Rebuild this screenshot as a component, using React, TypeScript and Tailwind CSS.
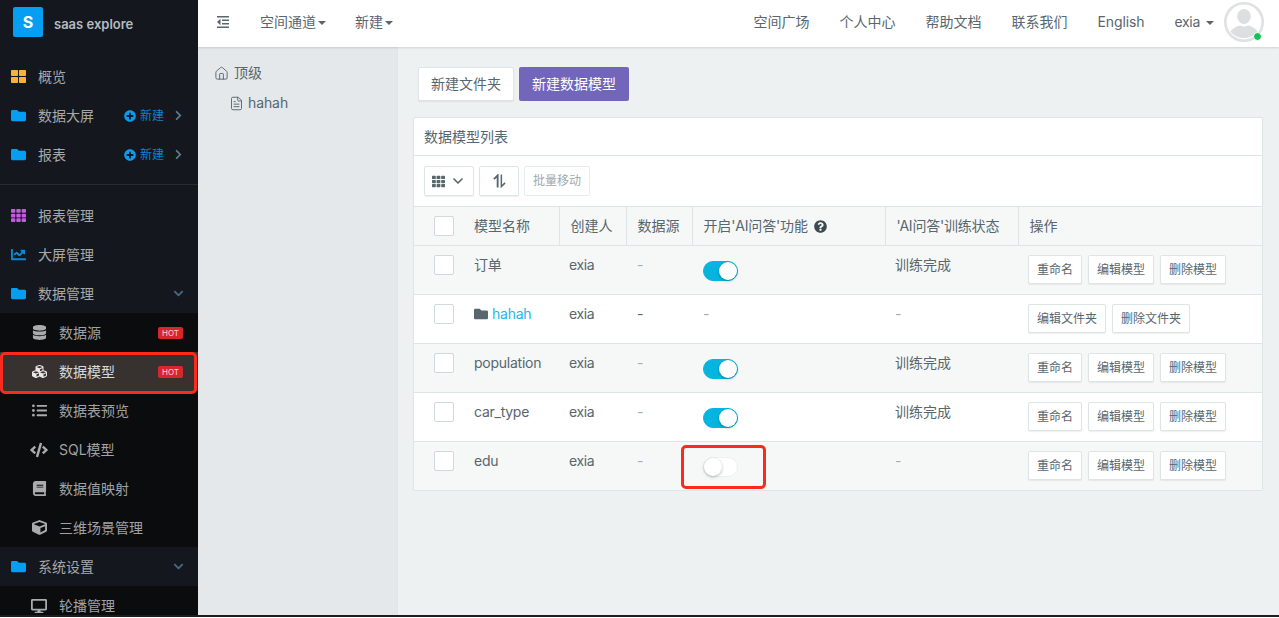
import { ReactNode } from 'react';
import {
  FaFolder,
  FaThLarge,
  FaTh,
  FaChartLine,
  FaDatabase,
  FaCubes,
  FaListUl,
  FaCode,
  FaBook,
  FaCube,
  FaDesktop,
  FaPlusCircle,
  FaChevronRight,
  FaChevronDown,
  FaQuestionCircle,
} from 'react-icons/fa';
import { Home, FileText, ChevronDown } from 'lucide-react';

const fontStack = "font-['Inter','Noto_Sans_CJK_SC',sans-serif]";

function NewTag() {
  return (
    <span className="flex items-center gap-[4px] text-xs text-[#0b84c9]">
      <FaPlusCircle className="text-[12px] text-[#0c9cee]" />
      新建
    </span>
  );
}

function NavRow({ icon, label, right, className = '' }: { icon: ReactNode; label: string; right?: ReactNode; className?: string }) {
  return (
    <div className={`flex h-[39px] shrink-0 items-center pl-[11px] pr-[14px] ${className}`}>
      <span className="flex w-[27px] shrink-0 items-center">{icon}</span>
      <span className="flex-1 text-sm text-[#a6a8aa]">{label}</span>
      {right}
    </div>
  );
}

function SubRow({ icon, label, hot, active }: { icon: ReactNode; label: string; hot?: boolean; active?: boolean }) {
  return (
    <div className={`flex h-[39px] shrink-0 items-center pl-[30px] pr-[15px] ${active ? 'bg-[#373230]' : ''}`}>
      <span className={`mr-[11px] flex w-[18px] shrink-0 items-center justify-center text-[15px] ${active ? 'text-[#e8e8e8]' : 'text-[#a9abad]'}`}>{icon}</span>
      <span className={`flex-1 text-sm ${active ? 'text-[#d8d8d8]' : 'text-[#a0a2a4]'}`}>{label}</span>
      {hot && <span className="rounded-[2px] bg-[#d9262e] px-[4px] text-[8px] leading-[12px] text-[#f5d5d5]">HOT</span>}
    </div>
  );
}

function Sidebar() {
  const chevronRight = <FaChevronRight className="text-[11px] text-[#5b7c92]" />;
  const chevronDown = <FaChevronDown className="text-[11px] text-[#456a80]" />;
  return (
    <aside className="flex h-full w-[198px] shrink-0 flex-col overflow-hidden bg-[#14171d]">
      <div className="flex h-[57px] shrink-0 items-start pl-[13px] pt-[7px]">
        <div className="flex h-[30px] w-[30px] items-center justify-center rounded-[2px] bg-[#069ef2] text-base font-bold text-white">S</div>
        <span className="ml-[11px] mt-[8px] text-[13px] font-semibold leading-[18px] text-[#b4bbc1]">saas explore</span>
      </div>
      <NavRow icon={<FaThLarge className="text-[15px] text-[#fdb133]" />} label="概览" />
      <NavRow icon={<FaFolder className="text-[15px] text-[#069ef2]" />} label="数据大屏" right={<span className="flex items-center gap-[9px]"><NewTag />{chevronRight}</span>} />
      <NavRow icon={<FaFolder className="text-[15px] text-[#069ef2]" />} label="报表" right={<span className="flex items-center gap-[9px]"><NewTag />{chevronRight}</span>} />
      <div className="mb-[11px] mt-[10px] h-[1px] shrink-0 border-t border-[#2b2c2e]" />
      <NavRow icon={<FaTh className="text-[15px] text-[#c45ae0]" />} label="报表管理" />
      <NavRow icon={<FaChartLine className="text-[15px] text-[#0a8ad6]" />} label="大屏管理" />
      <NavRow icon={<FaFolder className="text-[15px] text-[#069ef2]" />} label="数据管理" right={chevronDown} />
      <div className="flex shrink-0 flex-col bg-[#0b0c0e]">
        <SubRow icon={<FaDatabase />} label="数据源" hot />
        <SubRow icon={<FaCubes />} label="数据模型" hot active />
        <SubRow icon={<FaListUl />} label="数据表预览" />
        <SubRow icon={<FaCode className="text-[18px]" />} label="SQL模型" />
        <SubRow icon={<FaBook />} label="数据值映射" />
        <SubRow icon={<FaCube />} label="三维场景管理" />
      </div>
      <NavRow icon={<FaFolder className="text-[15px] text-[#069ef2]" />} label="系统设置" right={chevronDown} />
      <div className="flex shrink-0 flex-col bg-[#0b0c0e]">
        <SubRow icon={<FaDesktop className="text-[16px]" />} label="轮播管理" />
      </div>
    </aside>
  );
}

function Caret() {
  return <span className="ml-[2px] inline-block border-x-[4px] border-t-[4px] border-x-transparent border-t-[#58666e] align-middle" />;
}

function Topbar() {
  return (
    <header className="relative z-10 flex h-[47px] shrink-0 items-center bg-white pb-[4px] pl-[19px] pr-[15px] text-sm text-[#58666e] shadow-[0_1px_2px_rgba(0,0,0,0.12)]">
      <svg viewBox="0 0 12 12" className="h-[12px] w-[12px]" fill="#58666e">
        <rect x="0" y="0" width="12" height="1.5" />
        <rect x="5" y="3.5" width="7" height="1.5" />
        <rect x="5" y="7" width="7" height="1.5" />
        <rect x="0" y="10.5" width="12" height="1.5" />
        <path d="M3.5 2.8v6.4L0 6z" />
      </svg>
      <span className="ml-[31px]">空间通道<Caret /></span>
      <span className="ml-[29px]">新建<Caret /></span>
      <div className="ml-auto flex items-center">
        <span>空间广场</span>
        <span className="ml-[30px]">个人中心</span>
        <span className="ml-[30px]">帮助文档</span>
        <span className="ml-[30px]">联系我们</span>
        <span className="ml-[30px] tracking-[-0.1px]">English</span>
        <span className="ml-[30px] tracking-[-0.3px]">exia<span className="ml-[6px] inline-block border-x-[4px] border-t-[4px] border-x-transparent border-t-[#58666e] align-middle" /></span>
        <span className="relative ml-[10px] block h-[40px] w-[40px]">
          <svg viewBox="0 0 40 40" className="h-[40px] w-[40px]">
            <circle cx="20" cy="20" r="18.7" fill="#fff" stroke="#dfe1e2" strokeWidth="2.6" />
            <ellipse cx="20" cy="14.5" rx="6.8" ry="7.6" fill="#dcdee0" />
            <path d="M6.5 29.5c2-3.5 6.5-5.5 9.5-6 2.5 1.5 5.5 1.5 8 0 3 .5 7.500 2.500 9.500 6-3 4-8 6.500-13.500 6.500s-10.500-2.500-13.500-6.500z" fill="#dcdee0" />
          </svg>
          <span className="absolute bottom-[1px] right-[2px] h-[9px] w-[9px] rounded-full border border-white bg-[#14c25a]" />
        </span>
      </div>
    </header>
  );
}

function Tree() {
  return (
    <div className="w-[200px] shrink-0 border-r border-[#e0e5e8] bg-[#e4e8eb] pl-[16px] pt-[16px] text-sm text-[#58666e]">
      <div className="flex h-[20px] items-center">
        <Home size={15} strokeWidth={1.5} />
        <span className="ml-[5px]">顶级</span>
      </div>
      <div className="ml-[15px] mt-[10px] flex h-[20px] items-center">
        <FileText size={15} strokeWidth={1.5} />
        <span className="ml-[4px] tracking-[-0.1px]">hahah</span>
      </div>
    </div>
  );
}

function Toggle({ on }: { on: boolean }) {
  return (
    <span className={`flex h-[20px] w-[35px] rounded-full border ${on ? 'justify-end border-[#05b5e0] bg-[#05b5e0]' : 'justify-start border-[#eef0f1] bg-white'}`}>
      <span className="h-[18px] w-[18px] rounded-full bg-white shadow-[0_1px_3px_rgba(0,0,0,0.3)]" />
    </span>
  );
}

function Check() {
  return <span className="block h-[20px] w-[20px] rounded-[2px] border border-[#cfdadd] bg-white" />;
}

function RowBtn({ children }: { children: ReactNode }) {
  return (
    <span className="flex h-[29px] items-center rounded-[2px] border border-[#dee5e7] bg-white px-[8px] text-xs text-[#58666e] shadow-[0_1px_1px_rgba(90,90,90,0.1)]">
      {children}
    </span>
  );
}

interface ModelRow {
  name: string;
  folder?: boolean;
  ai: boolean | null;
  status: string;
}

const rows: ModelRow[] = [
  { name: '订单', ai: true, status: '训练完成' },
  { name: 'hahah', folder: true, ai: null, status: '-' },
  { name: 'population', ai: true, status: '训练完成' },
  { name: 'car_type', ai: true, status: '训练完成' },
  { name: 'edu', ai: false, status: '-' },
];

function ModelTable() {
  const th = 'h-[39px] border-l border-[#dee5e7] px-[11px] text-left align-middle font-normal first:border-l-0';
  return (
    <table className="w-full table-fixed border-collapse text-sm text-[#58666e]">
      <colgroup>
        <col className="w-[145px]" />
        <col className="w-[67px]" />
        <col className="w-[66px]" />
        <col className="w-[193px]" />
        <col className="w-[133px]" />
        <col />
      </colgroup>
      <thead>
        <tr className="border-y border-[#dee5e7] bg-[#f6f8f8]">
          <th className={th}>
            <span className="flex items-center">
              <span className="ml-[9px] mr-[20px]"><Check /></span>模型名称
            </span>
          </th>
          <th className={th}>创建人</th>
          <th className={th}>数据源</th>
          <th className={th}>
            <span className="flex items-center tracking-[-0.15px]">开启'AI问答'功能<FaQuestionCircle className="ml-[6px] text-[13px] text-[#3d4a50]" /></span>
          </th>
          <th className={`${th} tracking-[-0.2px]`}>'AI问答'训练状态</th>
          <th className={th}>操作</th>
        </tr>
      </thead>
      <tbody>
        {rows.map((row, i) => (
          <tr key={row.name} className={`h-[49px] border-b border-[#dee5e7] last:h-[48px] last:border-b-0 ${i % 2 === 0 ? 'bg-[#f6f8f8]' : 'bg-white'}`}>
            <td className="px-[11px] pt-[9px] align-top">
              <span className="flex h-[20px] items-center">
                <span className="ml-[9px] mr-[20px]"><Check /></span>
                {row.folder && <FaFolder className="mr-[4px] text-[14px] text-[#58666e]" />}
                <span className={`tracking-[-0.25px] ${row.folder ? 'text-[#23b7e5]' : ''}`}>{row.name}</span>
              </span>
            </td>
            <td className="px-[10px] pt-[9px] align-top leading-[20px] tracking-[-0.4px]">exia</td>
            <td className={`px-[11px] pt-[9px] align-top leading-[20px] ${row.folder ? '' : 'text-[#a3aeb3]'}`}>-</td>
            <td className="px-[11px] pt-[9px] align-top leading-[20px]">
              {row.ai === null ? <span className="text-[#a3aeb3]">-</span> : <span className="mt-[6px] block"><Toggle on={row.ai} /></span>}
            </td>
            <td className={`px-[10px] pt-[9px] align-top leading-[20px] ${row.status === '-' ? 'text-[#a3aeb3]' : ''}`}>{row.status}</td>
            <td className="px-[10px] pt-[9px] align-top">
              <span className="flex gap-[6px]">
                {row.folder ? (
                  <>
                    <RowBtn>编辑文件夹</RowBtn>
                    <RowBtn>删除文件夹</RowBtn>
                  </>
                ) : (
                  <>
                    <RowBtn>重命名</RowBtn>
                    <RowBtn>编辑模型</RowBtn>
                    <RowBtn>删除模型</RowBtn>
                  </>
                )}
              </span>
            </td>
          </tr>
        ))}
      </tbody>
    </table>
  );
}

function Main() {
  return (
    <main className="min-w-0 flex-1 bg-[#edf1f2] pl-[15px] pr-[16px] pt-[20px]">
      <div className="ml-[5px] flex gap-[5px] text-sm">
        <button className="h-[34px] w-[96px] rounded-[2px] border border-[#dee5e7] bg-white text-[#58666e] shadow-[0_1px_1px_rgba(90,90,90,0.1)]">新建文件夹</button>
        <button className="h-[34px] w-[110px] rounded-[2px] bg-[#7266ba] text-white">新建数据模型</button>
      </div>
      <section className="mt-[16px] rounded-[2px] border border-[#dee5e7] bg-white">
        <div className="flex h-[37px] items-center px-[10px] text-sm text-[#58666e]">数据模型列表</div>
        <div className="flex h-[51px] items-center gap-[5px] border-t border-[#dee5e7] px-[10px]">
          <span className="flex h-[30px] w-[50px] items-center justify-center gap-[5px] rounded-[2px] border border-[#dee5e7] text-[#58666e] shadow-[0_1px_1px_rgba(90,90,90,0.1)]">
            <FaTh className="text-[13px]" />
            <ChevronDown size={16} strokeWidth={2.5} />
          </span>
          <span className="flex h-[30px] w-[40px] items-center justify-center rounded-[2px] border border-[#dee5e7] shadow-[0_1px_1px_rgba(90,90,90,0.1)]">
            <svg viewBox="0 0 14 14" className="h-[14px] w-[13px]" fill="none" stroke="#58666e">
              <path d="M5 14V1L1 5" strokeWidth="2" />
              <path d="M9 0v13l4-4" strokeWidth="1.6" />
            </svg>
          </span>
          <span className="flex h-[30px] w-[66px] items-center justify-center rounded-[2px] border border-[#e6ecee] text-xs text-[#a0a9ae]">批量移动</span>
        </div>
        <ModelTable />
      </section>
    </main>
  );
}

export default function App() {
  return (
    <div className={`relative flex h-[618px] w-[1279px] overflow-hidden bg-white ${fontStack}`}>
      <Sidebar />
      <div className="flex min-w-0 flex-1 flex-col">
        <Topbar />
        <div className="flex min-h-0 flex-1">
          <Tree />
          <Main />
        </div>
      </div>
      {/* annotation boxes drawn over the screenshot */}
      <div className="pointer-events-none absolute left-[0px] top-[352px] h-[42px] w-[197px] rounded-[5px] border-[3px] border-[#fb2a1c]" />
      <div className="pointer-events-none absolute left-[681px] top-[445px] h-[44px] w-[85px] rounded-[5px] border-[3px] border-[#fb2a1c]" />
      <div className="absolute bottom-0 left-0 h-[3px] w-full border-b border-white bg-[#1b1d20]" />
    </div>
  );
}
